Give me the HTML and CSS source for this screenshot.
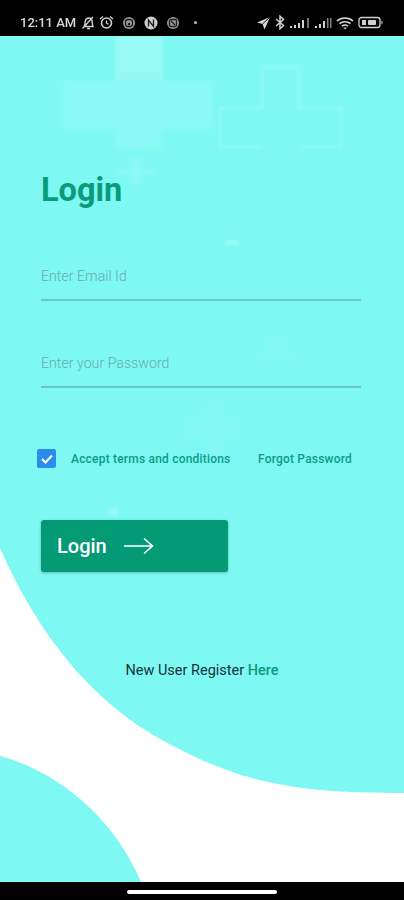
FILE: index.html
```html
<!DOCTYPE html>
<html lang="en">
<head>
    <meta charset="UTF-8">
    <title>Login</title>
    <link rel="stylesheet" href="styles.css">
</head>
<body>
    <div class="status-bar">
        <div class="status-left">
            <span class="clock">12:11 AM</span>
            <svg class="st-icon" width="14" height="14" viewBox="0 0 14 14"><path d="M3 10.500c1-1.500 1-3 1.200-4.800C4.500 3.500 5.800 2 8 2s2.800 1 3 2.500c.2 2 .3 4.500 1 6H2.500zM6 12.500h3M1.500 12.500 12 1" fill="none" stroke="#cfcfcf" stroke-width="1.400"/></svg>
            <svg class="st-icon" width="15" height="15" viewBox="0 0 15 15"><circle cx="7.500" cy="8" r="5" fill="none" stroke="#cfcfcf" stroke-width="1.600"/><path d="M7.500 5.500V8l1.800 1.300M1 4l3-2.500M14 4l-3-2.500" fill="none" stroke="#cfcfcf" stroke-width="1.400"/></svg>
            <svg class="st-icon app" width="14" height="14" viewBox="0 0 14 14"><circle cx="7" cy="7" r="6" fill="#9a9a9a"/><rect x="3.500" y="3.500" width="7" height="7" rx="2.500" fill="none" stroke="#1c1c1c" stroke-width="1.300"/><circle cx="7" cy="8" r="1.200" fill="#1c1c1c"/></svg>
            <svg class="st-icon app" width="14" height="14" viewBox="0 0 14 14"><circle cx="7" cy="7" r="6.500" fill="#cfcfcf"/><path d="M4.500 10.500V4l5 6.500V3.500" fill="none" stroke="#222" stroke-width="1.400"/></svg>
            <svg class="st-icon app" width="14" height="14" viewBox="0 0 14 14"><circle cx="7" cy="7" r="6" fill="#9a9a9a"/><rect x="3.500" y="3.500" width="7" height="7" rx="1.500" fill="none" stroke="#1c1c1c" stroke-width="1.300"/><path d="M5 5l4 4" stroke="#1c1c1c" stroke-width="1.200"/></svg>
            <span class="st-dot"></span>
        </div>
        <div class="status-right">
            <svg width="15" height="14" viewBox="0 0 15 14"><path d="M14 1 1 6.500l5.500 1.500L8.500 13.500z" fill="#d8d8d8"/><path d="M6.500 8 14 1" stroke="#111" stroke-width="1"/></svg>
            <svg width="10" height="15" viewBox="0 0 10 15"><path d="M1 4l7.500 6.500L5 13.800V1.200L8.500 4.500 1 11" fill="none" stroke="#d0d0d0" stroke-width="1.500"/></svg>
            <svg width="21" height="12" viewBox="0 0 21 12"><path d="M1 9h2v2H1zM5 8h2v3H5zM9 6h2v5H9zM13 3h2v8h-2z" fill="#d0d0d0"/><path d="M18 1h2v10h-2z" fill="#707070"/></svg>
            <svg width="18" height="12" viewBox="0 0 18 12"><path d="M1 9h2v2H1zM5 7h2v4H5zM9 4h2v7H9z" fill="#d0d0d0"/><path d="M13 1h1.500v10H13zM16 1h1.500v10H16z" fill="#808080"/></svg>
            <svg width="18" height="14" viewBox="0 0 18 14"><path d="M1 5c4.500-4 11.500-4 16 0M3.500 7.700c3-2.700 8-2.700 11 0M6 10.200c1.700-1.400 4.300-1.400 6 0" fill="none" stroke="#d8d8d8" stroke-width="1.600"/><path d="M9 13.500l-1.800-2h3.600z" fill="#d8d8d8"/></svg>
            <svg class="battery" width="26" height="13" viewBox="0 0 26 13"><rect x="1" y="1.500" width="21" height="10" rx="2.500" fill="none" stroke="#cfcfcf" stroke-width="1.300"/><rect x="4" y="4" width="4" height="5" fill="#cfcfcf"/><rect x="10" y="4" width="8" height="5" rx="1" fill="#cfcfcf"/><path d="M23.500 4.500c1.500.5 1.500 3.500 0 4z" fill="#cfcfcf"/></svg>
        </div>
    </div>

    <main class="screen">
        <!-- background shapes, sits behind the form -->
        <svg class="backdrop" width="404" height="846" viewBox="0 36 404 846">
            <path d="M0 36H404V793C300 793 240 786 150 733C95 700 40 640 0 548Z" fill="#7df8f2"/>
            <path d="M0 756C60 772 115 820 141 882H0Z" fill="#7df8f2"/>
            <g class="faint-shapes">
                <path d="M115 36H163V80H213V130H163V150H115V130H63V80H115Z" fill="#fff" fill-opacity=".1"/>
                <path d="M115 36H163V80H115Z" fill="#fff" fill-opacity=".1"/>
                <path d="M262 108V67H299V108H341V147H299M262 108H220V147H262" fill="none" stroke="#fff" stroke-opacity=".22" stroke-width="2"/>
                <path d="M262 67H299V108H262Z" fill="#fff" fill-opacity=".02"/>
                <path d="M131 157H141V168H155V175H141V185H131V175H117V168H131Z" fill="#fff" fill-opacity=".1"/>
                <path d="M267 335H283V355H298V358H252V355H267Z" fill="#fff" fill-opacity=".05"/>
                <path d="M205 402H222V420H238V440H222V458H205V440H185V420H205Z" fill="#fff" fill-opacity=".05"/>
                <rect x="225" y="240" width="14" height="5" rx="2" fill="#fff" fill-opacity=".2"/>
                <rect x="108" y="508" width="10" height="8" rx="3" fill="#fff" fill-opacity=".2"/>
            </g>
        </svg>

        <form class="login-form">
            <h1 class="title">Login</h1>
            <input class="field" type="email" placeholder="Enter Email Id">
            <input class="field" type="password" placeholder="Enter your Password">
            <div class="options">
                <label class="terms">
                    <span class="check">
                        <svg width="12" height="10" viewBox="0 0 12 10"><path d="M1 5l3.500 3.500L11 1.500" fill="none" stroke="#fff" stroke-width="2"/></svg>
                    </span>
                    Accept terms and conditions
                </label>
                <a class="forgot" href="#">Forgot Password</a>
            </div>
            <button class="login-btn" type="button">
                Login
                <svg width="30" height="18" viewBox="0 0 30 18"><path d="M0 9H28M20 1.500 28.500 9 20 16.500" fill="none" stroke="#fff" stroke-width="1.600"/></svg>
            </button>
            <p class="register">New User Register <a href="#">Here</a></p>
        </form>
    </main>

    <div class="nav-bar"><span class="home-pill"></span></div>
</body>
</html>
```

FILE: styles.css
```css
* {
    box-sizing: border-box;
}
body {
    margin: 0;
    width: 404px;
    height: 900px;
    overflow: hidden;
    background: #fff;
    font-family: Roboto, Arial, sans-serif;
}
.status-bar {
    height: 36px;
    background: #000;
    display: flex;
    justify-content: space-between;
    align-items: center;
    padding: 9px 20px 0;
    color: #d8d8d8;
}
.status-left, .status-right {
    display: flex;
    align-items: center;
    filter: blur(.5px);
}
.status-left {
    gap: 4px;
}
.status-right {
    gap: 4px;
}
.clock {
    font-size: 13px;
    font-weight: 500;
    margin-right: 1px;
}
.app {
    margin-left: 4px;
}
.st-dot {
    width: 3px;
    height: 3px;
    border-radius: 50%;
    background: #bbb;
    margin-left: 10px;
}
.screen {
    position: relative;
    height: 846px;
    overflow: hidden;
}
.backdrop {
    position: absolute;
    left: 0;
    top: 0;
}
.faint-shapes {
    filter: blur(1.500px);
}
.login-form {
    position: relative;
    display: flex;
    flex-direction: column;
    padding: 135px 43px 0 41px;
}
.title {
    margin: 0 0 51px;
    font-size: 32.500px;
    line-height: 38px;
    font-weight: 700;
    color: #0a9a7c;
}
.field {
    width: 100%;
    height: 41px;
    margin-bottom: 46px;
    padding: 0 0 7px;
    background: transparent;
    border: none;
    border-bottom: 2px solid #6cc6c4;
    font-family: inherit;
    font-size: 14.200px;
    font-weight: 300;
}
.field::placeholder {
    color: #6cabab;
    opacity: 1;
}
.options {
    display: flex;
    align-items: center;
    justify-content: space-between;
    margin: 15px 9px 0 -4px;
    font-size: 12px;
    font-weight: 500;
    letter-spacing: .2px;
    color: #0c9c86;
}
.terms {
    display: flex;
    align-items: center;
    gap: 15px;
}
.check {
    width: 19px;
    height: 19px;
    border-radius: 2px;
    background: #2b8cee;
    display: flex;
    align-items: center;
    justify-content: center;
}
.forgot {
    color: #0c9c86;
    text-decoration: none;
}
.login-btn {
    display: flex;
    align-items: center;
    gap: 17px;
    width: 187px;
    height: 52px;
    margin-top: 52px;
    padding: 0 16px;
    background: #049a76;
    color: #fff;
    border: none;
    border-radius: 3px;
    box-shadow: 0 1px 3px rgba(0, 0, 0, .25);
    font-family: inherit;
    font-size: 20px;
    font-weight: 500;
}
.register {
    margin: 90px 0 0 2px;
    text-align: center;
    font-size: 14.500px;
    line-height: 18px;
    color: #16333a;
}
.register a {
    color: #0b9a78;
    font-weight: 500;
    text-decoration: none;
}
.nav-bar {
    height: 18px;
    background: #000;
    display: flex;
    justify-content: center;
    padding-top: 8px;
}
.home-pill {
    width: 150px;
    height: 4px;
    border-radius: 2px;
    background: #fff;
}
```
